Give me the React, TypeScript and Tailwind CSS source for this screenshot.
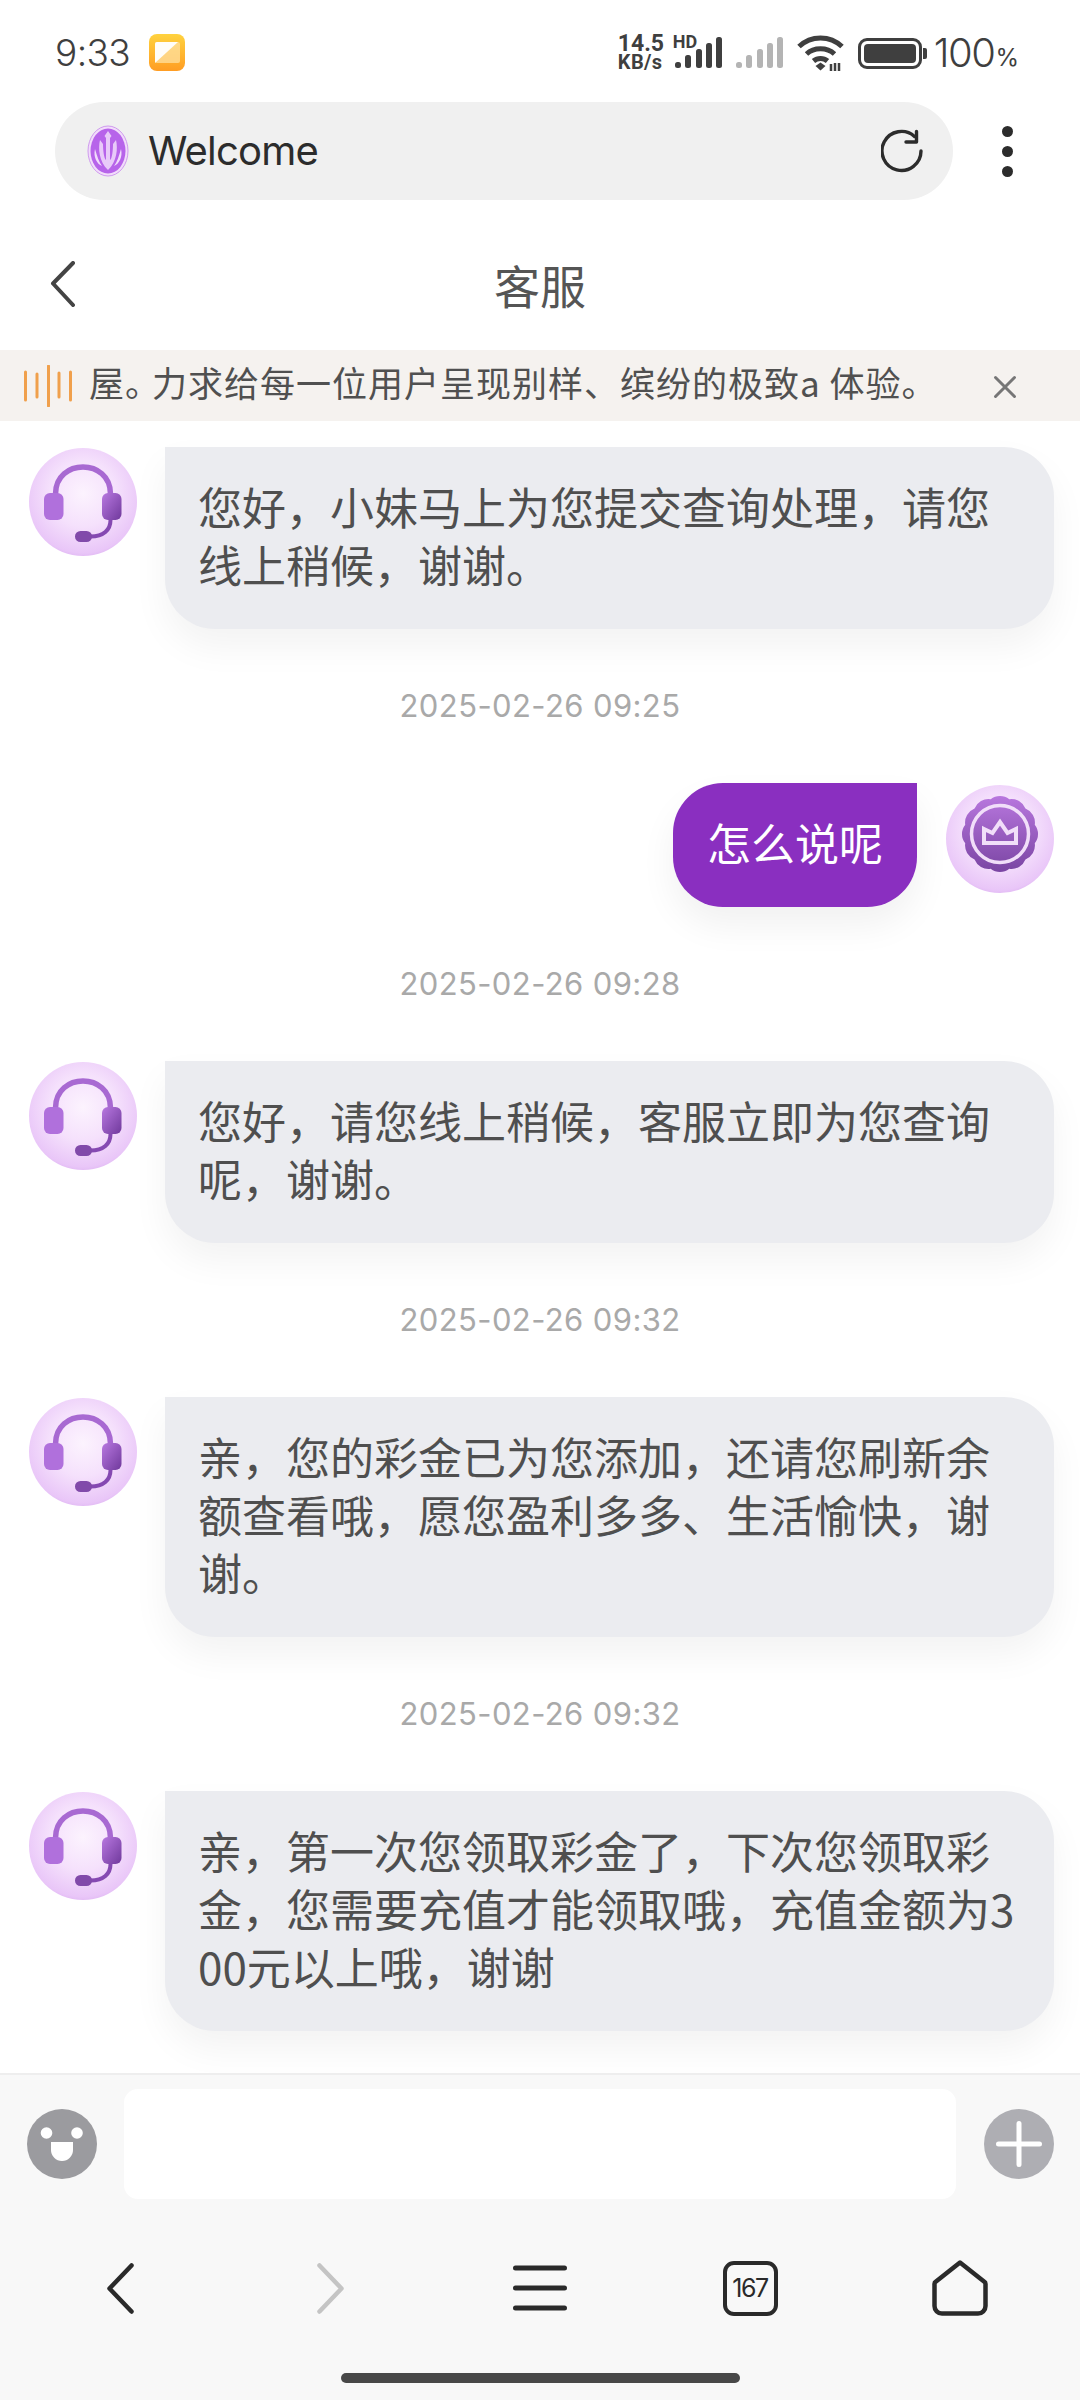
import { useId } from "react";

const CJK = "font-['Noto_Sans_CJK_SC','Noto_Sans',sans-serif]";
const LATIN = "font-['Inter','Noto_Sans_CJK_SC',sans-serif]";

const AVATAR_BG =
  "w-[108px] h-[108px] shrink-0 rounded-full bg-[radial-gradient(circle_at_50%_42%,#fcf3fe_0%,#f5e1fc_40%,#e9c6f8_72%,#c084e2_100%)]";

type Msg = { time?: string; text: string; mine?: boolean };

const messages: Msg[] = [
  { text: "您好，小妹马上为您提交查询处理，请您线上稍候，谢谢。" },
  { time: "2025-02-26 09:25", text: "怎么说呢", mine: true },
  { time: "2025-02-26 09:28", text: "您好，请您线上稍候，客服立即为您查询呢，谢谢。" },
  { time: "2025-02-26 09:32", text: "亲，您的彩金已为您添加，还请您刷新余额查看哦，愿您盈利多多、生活愉快，谢谢。" },
  { time: "2025-02-26 09:32", text: "亲，第一次您领取彩金了，下次您领取彩金，您需要充值才能领取哦，充值金额为300元以上哦，谢谢" },
];

const Signal = ({ color }: { color: string }) => (
  <svg width="48" height="32" viewBox="0 0 48 32" fill={color}>
    <rect x="0" y="25" width="6" height="6" rx="2.5" />
    <rect x="10" y="18" width="6" height="13" rx="2.5" />
    <rect x="21" y="12" width="6" height="19" rx="2.5" />
    <rect x="31" y="6" width="6" height="25" rx="2.5" />
    <rect x="41" y="0" width="6" height="31" rx="2.5" />
  </svg>
);

const StatusBar = () => (
  <div className={`h-[102px] shrink-0 flex items-start justify-between pl-[55px] pr-[61px] pt-[34px] text-[#3f3f3f] ${LATIN}`}>
    <div className="flex items-center gap-[19px]">
      <span className="text-[37px] leading-[38px] tracking-[-0.6px] font-light">9:33</span>
      <div className="relative w-[36px] h-[37px] -mt-[2px] rounded-[8px] bg-gradient-to-b from-[#ffd23e] to-[#ff9d23]">
        <svg className="absolute left-[6px] top-[8px]" width="25" height="21" viewBox="0 0 25 21">
          <rect width="25" height="21" rx="2" fill="#ffe0a0" opacity="0.75" />
          <path d="M0 21V2a2 2 0 0 1 2-2h21L0 21z" fill="#fff" opacity="0.95" />
        </svg>
      </div>
    </div>
    <div className="flex items-center">
      <div className="w-[50px] flex flex-col font-['Roboto',sans-serif] font-bold text-[20px] leading-[18px] mr-[7px] -mt-[1px]">
        <span className="text-[23px] leading-[19px]">14.5</span>
        <span className="tracking-[0.4px]">KB/s</span>
      </div>
      <div className="relative mr-[13px]">
        <span className="absolute -top-[4px] -left-[2px] font-['Roboto',sans-serif] font-bold text-[18px] leading-[18px]">HD</span>
        <Signal color="#3f3f3f" />
      </div>
      <div className="mr-[13px]">
        <Signal color="#b4b4b4" />
      </div>
      <svg className="mr-[14px]" width="47" height="36" viewBox="0 0 47 36" fill="none" stroke="#3f3f3f" strokeWidth="5">
        <path d="M2 11.5C14 0 33 0 45 11.5" />
        <path d="M9.5 19C17 12 30 12 37.5 19" />
        <path d="M16.5 26C20.5 22.5 26.5 22.5 30.5 26" />
        <path d="M18.5 31l5-3.5 5 3.5-5 4.5z" fill="#3f3f3f" stroke="none" />
        <path d="M34 36v-7M38 36v-8M42 36v-8" strokeWidth="2.5" />
      </svg>
      <div className="flex items-center mr-[7px]">
        <div className="w-[64px] h-[31px] rounded-[9px] border-[3px] border-[#3f3f3f] p-[3px]">
          <div className="w-full h-full rounded-[4px] bg-[#3f3f3f]" />
        </div>
        <div className="w-[4px] h-[11px] ml-[1px] rounded-r-[2px] bg-[#3f3f3f]" />
      </div>
      <span className="text-[40px] leading-[38px] tracking-[-1.5px] font-light">100</span>
      <span className="text-[24px] leading-[24px] mt-[10px] ml-[1px]">%</span>
    </div>
  </div>
);

const UrlBar = () => (
  <div className="h-[98px] shrink-0 flex items-center pl-[55px]">
    <div className="w-[898px] h-full rounded-full bg-[#f0f0f0] flex items-center pl-[32px] pr-[28px]">
      <svg width="42" height="52" viewBox="0 0 42 52">
        <ellipse cx="21" cy="26" rx="20" ry="25" fill="#f2dcfb" stroke="#cf9bee" strokeWidth="1" />
        <ellipse cx="21" cy="26" rx="17.5" ry="22.5" fill="#b764ea" />
        <path d="M21 6l3.5 5-1.500 2v22c2-1 3-10 3-16l3-4c2 8 1 22-8 30-9-8-10-22-8-30l3 4c0 6 1 15 3 16V13l-1.500-2z" fill="#f1dcfb" opacity="0.85" />
        <path d="M8 24c2 7 4 13 7 17-5-2-9-9-7-17zM34 24c-2 7-4 13-7 17 5-2 9-9 7-17z" fill="#f1dcfb" />
      </svg>
      <span className={`ml-[19px] text-[40px] leading-none tracking-[-0.8px] text-[#2c2c2c] flex-1 ${LATIN}`}>Welcome</span>
      <svg width="44" height="44" viewBox="0 0 44 44" fill="none" stroke="#2c2c2c" strokeWidth="3.4" strokeLinecap="round" strokeLinejoin="round">
        <path d="M40 22a19.5 19.5 0 1 1-6.5-14.6" />
        <path d="M35.5 2.5v10.5H25" />
      </svg>
    </div>
    <div className="ml-[49px] flex flex-col gap-[9px]">
      <div className="w-[11px] h-[11px] rounded-full bg-[#2c2c2c]" />
      <div className="w-[11px] h-[11px] rounded-full bg-[#2c2c2c]" />
      <div className="w-[11px] h-[11px] rounded-full bg-[#2c2c2c]" />
    </div>
  </div>
);

const Header = () => (
  <div className="relative h-[150px] shrink-0 flex items-center justify-center pt-[18px]">
    <svg className="absolute left-[50px] top-[61px]" width="26" height="46" viewBox="0 0 26 46" fill="none" stroke="#444" strokeWidth="4" strokeLinecap="round" strokeLinejoin="round">
      <path d="M23 2L3 22.5 23 44" />
    </svg>
    <span className={`text-[46px] leading-none text-[#555555] ${CJK}`}>客服</span>
  </div>
);

const Notice = () => (
  <div className="h-[71px] shrink-0 bg-[#f5f2ef] flex items-center relative">
    <svg className="ml-[23px] shrink-0" width="50" height="42" viewBox="0 0 50 42" stroke="#f0a04c" strokeWidth="3" strokeLinecap="round">
      <path d="M2.5 7v28M14 9v23M25.5 1v40M36 8v24M47.5 7v28" />
    </svg>
    <span className={`ml-[16px] mb-[8px] text-[35px] leading-none tracking-[1px] text-[#505050] whitespace-nowrap ${CJK}`}>
      屋<span className="tracking-[-8px]">。</span>力求给每一位用户呈现别样、缤纷的极致a 体验。
    </span>
    <svg className="absolute left-[993px] top-[25px]" width="24" height="24" viewBox="0 0 24 24" stroke="#767676" strokeWidth="3" strokeLinecap="round">
      <path d="M2.5 2.5l19 19M21.5 2.5l-19 19" />
    </svg>
  </div>
);

const AgentAvatar = () => {
  const gid = useId().replace(/[^a-zA-Z0-9]/g, "");
  return (
    <div className={AVATAR_BG}>
      <svg width="108" height="108" viewBox="0 0 108 108">
        <defs>
          <linearGradient id={gid} x1="0" y1="0" x2="1" y2="1">
            <stop offset="0" stopColor="#b878e0" />
            <stop offset="1" stopColor="#70399c" />
          </linearGradient>
        </defs>
        <path d="M26.5 46C26.5 10 81.5 10 81.5 46" fill="none" stroke="#a869d2" strokeWidth="5.5" />
        <rect x="15" y="45" width="19.5" height="27" rx="6" fill="#b070dc" />
        <rect x="73" y="45" width="19.5" height="27" rx="6" fill={`url(#${gid})`} />
        <path d="M81.5 72c0 10-7 16.500-20 16.500" fill="none" stroke="#8549b2" strokeWidth="4" />
        <rect x="46" y="83" width="17" height="11" rx="5.500" fill="#814aaa" />
      </svg>
    </div>
  );
};

// scalloped badge outline, 12 shallow bumps round the centre
const scallop = () => {
  const n = 12;
  const r = 37;
  const pts = Array.from({ length: n }, (_, i) => {
    const a = (i / n) * Math.PI * 2 - Math.PI / 2 + Math.PI / n;
    return [54 + Math.cos(a) * (r - 1), 49 + Math.sin(a) * (r - 1)];
  });
  return (
    `M${pts[n - 1][0]} ${pts[n - 1][1]}` +
    pts.map(([x, y]) => `A15 15 0 0 1 ${x} ${y}`).join("") +
    "Z"
  );
};

const UserAvatar = () => {
  const gid = useId().replace(/[^a-zA-Z0-9]/g, "");
  return (
    <div className={AVATAR_BG}>
      <svg width="108" height="108" viewBox="0 0 108 108">
        <defs>
          <linearGradient id={gid} x1="0" y1="0" x2="0" y2="1">
            <stop offset="0" stopColor="#b877de" />
            <stop offset="1" stopColor="#7a45a3" />
          </linearGradient>
        </defs>
        <path d={scallop()} fill={`url(#${gid})`} />
        <circle cx="54" cy="49" r="28.5" fill="none" stroke="#f1def9" strokeWidth="3.5" />
        <path d="M38 44l8.500 4L54 37l7.500 11 8.500-4v14H38z" fill="none" stroke="#f1def9" strokeWidth="4" strokeLinejoin="miter" />
      </svg>
    </div>
  );
};

const Bubble = ({ msg }: { msg: Msg }) => {
  if (msg.mine) {
    return (
      <div className="flex justify-end items-start pr-[26px]">
        <div className={`px-[34px] pt-[30px] pb-[36px] rounded-[50px] rounded-tr-none bg-[#8a2fc0] text-white text-[44px] leading-[58px] shadow-[0_18px_36px_rgba(0,0,0,0.06)] ${CJK}`}>
          {msg.text}
        </div>
        <div className="ml-[29px] mt-[2px]">
          <UserAvatar />
        </div>
      </div>
    );
  }
  return (
    <div className="flex items-start pl-[29px]">
      <div className="mt-[1px]">
        <AgentAvatar />
      </div>
      <div className={`ml-[28px] w-[889px] px-[33px] pt-[30px] pb-[36px] rounded-[50px] rounded-tl-none bg-[#ebecf0] text-[#4f4f4f] text-[44px] leading-[58px] break-all shadow-[0_18px_36px_rgba(0,0,0,0.05)] ${CJK}`}>
        {msg.text}
      </div>
    </div>
  );
};

const ChatList = () => (
  <div className="flex-1 overflow-hidden pt-[26px]">
    {messages.map((m, i) => (
      <div key={i}>
        {m.time && (
          <div className="h-[154px] flex items-center justify-center text-[31px] tracking-[0.4px] text-[#a9a9a9] font-['Inter',sans-serif]">
            {m.time}
          </div>
        )}
        <Bubble msg={m} />
      </div>
    ))}
  </div>
);

const InputBar = () => (
  <div className="flex items-center pt-[14px] pl-[27px] pr-[26px]">
    <svg className="shrink-0" width="70" height="70" viewBox="0 0 70 70">
      <circle cx="35" cy="35" r="35" fill="#9b9b9f" />
      <circle cx="19.500" cy="24" r="5.800" fill="#fff" />
      <circle cx="50" cy="24" r="5.800" fill="#fff" />
      <path d="M24 33h22v8a11 11 0 0 1-22 0z" fill="#fff" />
    </svg>
    <div className="ml-[27px] w-[835px] h-[110px] rounded-[14px] bg-white" />
    <svg className="ml-[28px] shrink-0" width="70" height="70" viewBox="0 0 70 70" stroke="#fff" strokeWidth="5" strokeLinecap="round">
      <circle cx="35" cy="35" r="35" fill="#aeaeb3" stroke="none" />
      <path d="M35 14.500v41M14.500 35h41" />
    </svg>
  </div>
);

const BottomNav = () => (
  <div className="grid grid-cols-5 w-[1050px] mx-auto mt-[61px] h-[55px] items-center justify-items-center">
    <svg width="27" height="51" viewBox="0 0 27 51" fill="none" stroke="#2a2a2a" strokeWidth="4.500" strokeLinecap="round" strokeLinejoin="round">
      <path d="M24.500 2.500L2.500 25.500l22 23" />
    </svg>
    <svg width="27" height="51" viewBox="0 0 27 51" fill="none" stroke="#c4c4c4" strokeWidth="4.500" strokeLinecap="round" strokeLinejoin="round">
      <path d="M2.500 2.500l22 23-22 23" />
    </svg>
    <svg width="54" height="46" viewBox="0 0 54 46" stroke="#2a2a2a" strokeWidth="5" strokeLinecap="round">
      <path d="M2.500 3h49M2.500 23h49M2.500 43h49" />
    </svg>
    <div className={`w-[55px] h-[55px] rounded-[11px] border-[4.5px] border-[#2a2a2a] flex items-center justify-center text-[25px] leading-none text-[#2a2a2a] tracking-[-1.5px] ${LATIN}`}>
      167
    </div>
    <svg width="56" height="56" viewBox="0 0 56 56" fill="none" stroke="#2a2a2a" strokeWidth="4.500" strokeLinejoin="round">
      <path d="M28 2.500L52 21.500a3 3 0 0 1 1.500 3V46a7.500 7.500 0 0 1-7.500 7.500H10A7.500 7.500 0 0 1 2.500 46V24.500a3 3 0 0 1 1.500-3z" />
    </svg>
  </div>
);

export default function App() {
  return (
    <div className="w-[1080px] h-[2400px] bg-white flex flex-col overflow-hidden">
      <StatusBar />
      <UrlBar />
      <Header />
      <Notice />
      <ChatList />
      <div className="h-[327px] shrink-0 bg-[#f8f8f8] border-t-[2px] border-[#eeeeee] flex flex-col">
        <InputBar />
        <BottomNav />
        <div className="w-[399px] h-[10px] mx-auto mt-[58px] rounded-full bg-[#484848]" />
      </div>
    </div>
  );
}
